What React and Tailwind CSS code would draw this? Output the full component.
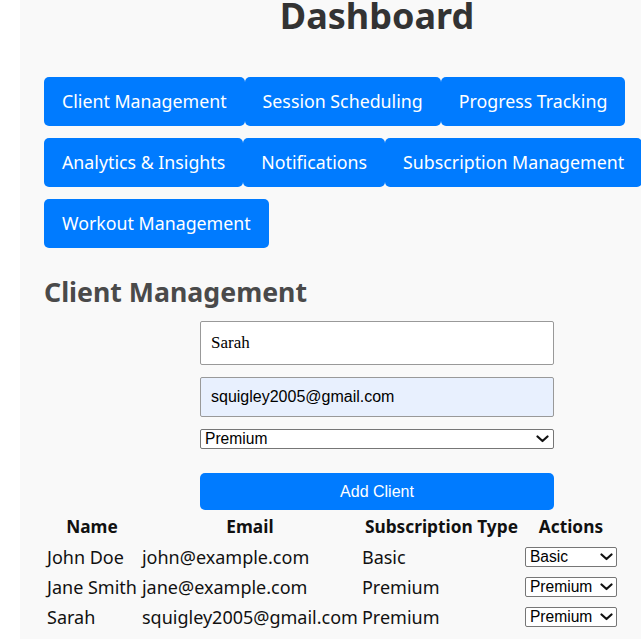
import React from "react";

const sans = { fontFamily: '"Noto Sans", "Open Sans", sans-serif' };
const arial = { fontFamily: '"Liberation Sans", Arial, sans-serif' };

function Chevron() {
  return (
    <svg width="13" height="8" viewBox="0 0 13 8" fill="none">
      <path d="M1.5 1.5 L6.5 6 L11.5 1.5" stroke="#111" strokeWidth="2.2" strokeLinecap="round" strokeLinejoin="round" />
    </svg>
  );
}

function Select({ value, className, chevronClass }) {
  return (
    <div className={"relative flex items-center h-[20px] " + className}>
      <select
        defaultValue={value}
        className="block w-full h-[20px] appearance-none bg-white border border-[#767676] rounded-[2px] pl-[4px] py-0 text-[15.6px] leading-[18px] text-black outline-none"
        style={arial}
      >
        <option>Basic</option>
        <option>Premium</option>
      </select>
      <div className={"pointer-events-none absolute top-[6px] " + chevronClass}>
        <Chevron />
      </div>
    </div>
  );
}

const navItems = [
  "Client Management",
  "Session Scheduling",
  "Progress Tracking",
  "Analytics & Insights",
  "Notifications",
  "Subscription Management",
  "Workout Management",
];

const clients = [
  { name: "John Doe", email: "john@example.com", sub: "Basic" },
  { name: "Jane Smith", email: "jane@example.com", sub: "Premium" },
  { name: "Sarah", email: "squigley2005@gmail.com", sub: "Premium" },
];

export default function App() {
  return (
    <div className="w-[641px] h-[639px] overflow-hidden bg-white">
      <div className="ml-[20px] w-[714px] h-[639px] bg-[#f9f9f9] px-[24px]" style={sans}>
        <h1 className="text-center text-[36px] leading-[32px] font-bold text-[#333]">Dashboard</h1>
        <div className="mt-[45px] flex flex-wrap gap-y-[12px]">
          {navItems.map((n) => (
            <button
              key={n}
              className="bg-[#007bff] text-white text-[17.8px] leading-[25px] px-[18px] py-[12px] rounded-[5px] whitespace-nowrap"
              style={sans}
            >
              {n}
            </button>
          ))}
        </div>
        <h2 className="mt-[26px] text-[26.7px] leading-[36px] font-bold text-[#4a4a4a]">Client Management</h2>
        <div className="mt-[11px] w-[354px] ml-[156px] flex flex-col">
          <input
            defaultValue="Sarah"
            className="h-[44px] bg-white border border-[#999] rounded-[2px] px-[10px] text-[17px] text-black outline-none"
            style={{ fontFamily: '"Liberation Serif", "Times New Roman", serif' }}
          />
          <input
            defaultValue="squigley2005@gmail.com"
            className="mt-[12px] h-[40px] bg-[#e8f0fe] border border-[#999] rounded-[2px] px-[10px] text-[16px] text-black outline-none"
            style={arial}
          />
          <Select value="Premium" className="mt-[12px] w-full" chevronClass="right-[5px]" />
          <button
            className="mt-[24px] h-[37px] bg-[#007bff] text-white rounded-[5px] text-[16px]"
            style={arial}
          >
            Add Client
          </button>
        </div>
        <table className="mt-[2px] border-collapse text-[18px] text-[#111] whitespace-nowrap" style={sans}>
          <thead>
            <tr className="h-[30px]">
              <th className="w-[95px] px-[3px] py-0 font-bold text-[17.3px]">Name</th>
              <th className="w-[220px] px-[2px] py-0 font-bold text-[17.3px]">Email</th>
              <th className="w-[163px] px-[2px] py-0 font-bold text-[17.3px]">Subscription Type</th>
              <th className="w-[94px] px-[2px] py-0 font-bold text-[17.3px]">Actions</th>
            </tr>
          </thead>
          <tbody>
            {clients.map((c) => (
              <tr key={c.name} className="h-[30px]">
                <td className="px-[3px] py-0">{c.name}</td>
                <td className="px-[2px] py-0">{c.email}</td>
                <td className="px-[2px] py-0">{c.sub}</td>
                <td className="px-[2px] py-0">
                  <Select value={c.sub} className="w-[92px]" chevronClass="right-[4px]" />
                </td>
              </tr>
            ))}
          </tbody>
        </table>
      </div>
    </div>
  );
}
